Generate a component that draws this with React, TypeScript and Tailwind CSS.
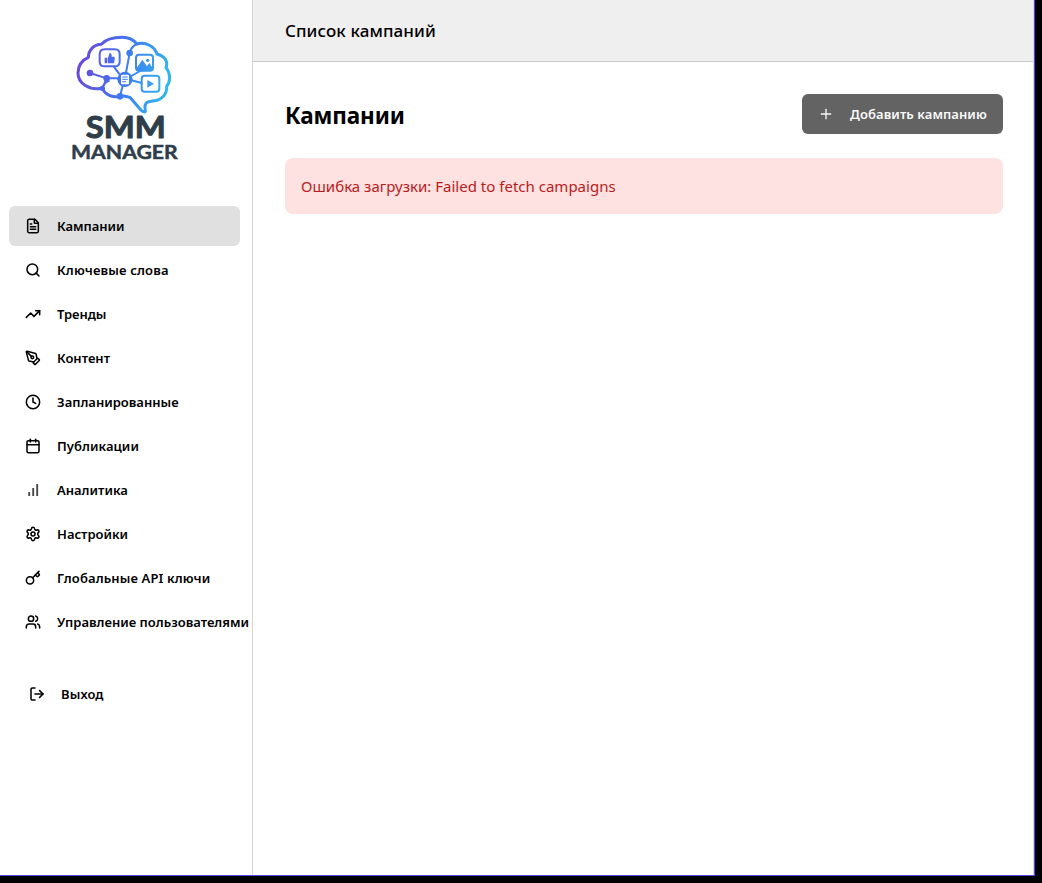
import {
  Calendar,
  Clock,
  FileText,
  Key,
  LogOut,
  PenTool,
  Plus,
  Search,
  Settings,
  TrendingUp,
  Users,
} from 'lucide-react';
import type { ComponentType } from 'react';

type NavItem = {
  label: string;
  icon: ComponentType<{ className?: string; strokeWidth?: number }>;
  tracking: string;
  active?: boolean;
};

function Bars({ className }: { className?: string }) {
  return (
    <svg className={className} viewBox="0 0 24 24" fill="none" stroke="#484848" strokeWidth="2.8">
      <path d="M12.3 21V9M18.3 21V3M6.3 21v-6" />
    </svg>
  );
}

const items: NavItem[] = [
  { label: 'Кампании', icon: FileText, tracking: 'tracking-[-0.05px]', active: true },
  { label: 'Ключевые слова', icon: Search, tracking: 'tracking-[0.16px]' },
  { label: 'Тренды', icon: TrendingUp, tracking: 'tracking-[-0.05px]' },
  { label: 'Контент', icon: PenTool, tracking: 'tracking-normal' },
  { label: 'Запланированные', icon: Clock, tracking: 'tracking-normal' },
  { label: 'Публикации', icon: Calendar, tracking: 'tracking-[0.05px]' },
  { label: 'Аналитика', icon: Bars, tracking: 'tracking-normal' },
  { label: 'Настройки', icon: Settings, tracking: 'tracking-normal' },
  { label: 'Глобальные API ключи', icon: Key, tracking: 'tracking-[0.12px]' },
  { label: 'Управление пользователями', icon: Users, tracking: 'tracking-normal' },
];

function Logo() {
  return (
    <svg width="130" height="145" viewBox="0 0 390 435" fill="none" strokeLinecap="round" strokeLinejoin="round">
      <defs>
        <linearGradient id="brain" gradientUnits="userSpaceOnUse" x1="50" y1="110" x2="330" y2="170">
          <stop offset="0" stopColor="#6d45dc" />
          <stop offset="0.5" stopColor="#3f78ee" />
          <stop offset="1" stopColor="#30b9ee" />
        </linearGradient>
      </defs>
      <g stroke="url(#brain)" strokeWidth="6">
        <path strokeWidth="9" d="M180 214C160 219 137 211 127 190C88 197 54 176 54 144C54 121 65 106 85 97C86 74 101 59 124 58C138 42 161 37 187 37C208 37 221 45 231 57C257 50 284 64 291 87C315 94 325 109 318 128C333 146 331 172 320 184C322 206 306 225 283 227L263 231C252 237 254 247 256 256C258 264 248 261 242 254L211 218C202 214 190 211 180 214Z" />
        <path d="M134 73h30q15 0 15 15v22q0 14-15 14h-3l16 22M161 124h-27q-15 0-15-14V88q0-15 15-15" />
        <path d="M90 144L140 160H176M127 190L140 160M209 84L198 143M246 135L214 153M214 166L245 174M180 214L188 182" />
        <path d="M127 190Q134 171 146 168M231 57Q214 64 209 84" />
        <rect x="228" y="89" width="51" height="48" rx="9" />
        <rect x="245" y="152" width="53" height="48" rx="9" />
      </g>
      <g fill="url(#brain)">
        <circle cx="90" cy="144" r="10" />
        <circle cx="140" cy="160" r="10" />
        <circle cx="209" cy="84" r="10" />
        <circle cx="180" cy="214" r="10" />
        <circle cx="127" cy="190" r="8" />
        <path d="M134 98h8v17h-8zM144 98l5-14q7 0 6 11h6q5 0 3 8l-2 12h-18z" />
        <path d="M230 129l17-25 14 20 7-10 10 15v7h-48z" />
        <circle cx="263" cy="106" r="5" />
        <path d="M262 165l20 11-20 12z" />
        <circle cx="195" cy="163" r="23" />
      </g>
      <rect x="183" y="149" width="24" height="29" rx="3" fill="#fff" />
      <path d="M188 156h14M188 163h14M188 170h9" stroke="#3f7cec" strokeWidth="3" />
      <g fill="#2f3e4a" stroke="#2f3e4a" fontFamily='"Lato", sans-serif' fontWeight="700">
        <text x="77" y="340" fontSize="90" strokeWidth="3" textLength="240" lengthAdjust="spacingAndGlyphs">SMM</text>
        <text x="33" y="401" fontSize="58" strokeWidth="1.5" textLength="320" lengthAdjust="spacingAndGlyphs">MANAGER</text>
      </g>
    </svg>
  );
}

export default function App() {
  return (
    <div className="h-[883px] w-[1042px] overflow-hidden bg-black font-['Noto_Sans',sans-serif] text-black">
      <div className="flex h-[876px] w-[1035px] border-r border-b border-[#5544e8] bg-white">
        <aside className="flex w-[253px] shrink-0 flex-col border-r border-[#d6d6d6]">
          <div className="h-[206px] pt-[25px] pl-[60px]">
            <Logo />
          </div>
          <nav className="flex flex-col gap-1 pl-[9px]">
            {items.map(({ label, icon: Icon, tracking, active }) => (
              <a
                key={label}
                className={`flex h-10 w-[231px] items-center gap-4 rounded-md px-4 text-[13px] font-semibold whitespace-nowrap ${active ? 'bg-[#e0e0e0]' : ''}`}
              >
                <Icon className="size-4 shrink-0" strokeWidth={2.3} />
                <span className={`pt-0.5 ${tracking}`}>{label}</span>
              </a>
            ))}
          </nav>
          <a className="mt-8 ml-[13px] flex h-10 items-center gap-4 px-4 text-[13px] font-semibold tracking-[0.1px]">
            <LogOut className="size-4" strokeWidth={2.3} />
            <span className="pt-0.5">Выход</span>
          </a>
        </aside>
        <div className="min-w-0 flex-1 border-r border-[#d8d4fb]">
          <header className="flex h-[62px] items-center border-b border-[#c8c8c8] bg-[#efefef] px-8">
            <h2 className="text-[17px] font-medium tracking-[0.1px] whitespace-nowrap">
              Список кампаний
            </h2>
          </header>
          <main className="flex flex-col gap-6 pt-8 pr-[30px] pl-8">
            <div className="flex h-10 items-center justify-between">
              <h1 className="pt-1 text-[22.5px] font-bold tracking-[-0.12px]">Кампании</h1>
              <button className="flex h-10 w-[201px] items-center gap-4 rounded-md bg-[#636363] px-4 text-[13px] font-semibold tracking-[0.08px] whitespace-nowrap text-[#fafafa]">
                <Plus className="size-4 shrink-0" strokeWidth={2} />
                <span className="pt-0.5">Добавить кампанию</span>
              </button>
            </div>
            <div className="flex h-14 items-center rounded-lg bg-[#fee1e1] px-4 text-[15px] tracking-[0.01px] text-[#b91c1c]">
              Ошибка загрузки: Failed to fetch campaigns
            </div>
          </main>
        </div>
      </div>
    </div>
  );
}
